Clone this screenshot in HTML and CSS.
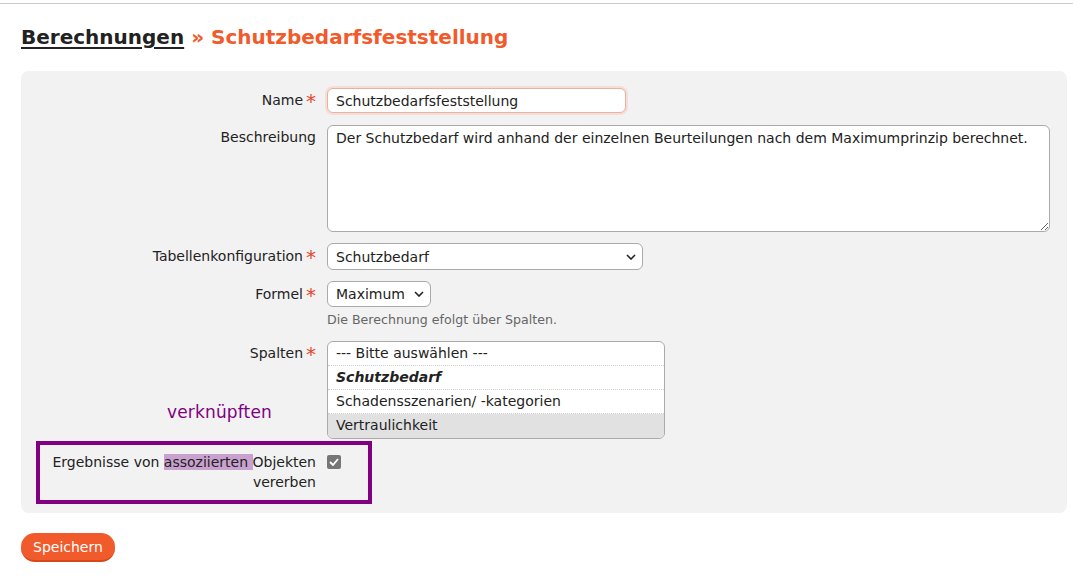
FILE: index.html
```html
<!DOCTYPE html>
<html lang="de">

<head>
    <meta charset="UTF-8">
    <meta name="viewport" content="width=device-width, initial-scale=1.0">
    <title>Schutzbedarfsfeststellung</title>
    <link rel="stylesheet" href="styles.css">
</head>

<body>
    <div class="topline"></div>
    <div class="page">
        <h1 class="crumbs"><a href="#">Berechnungen</a> <span class="current">» Schutzbedarfsfeststellung</span></h1>

        <form class="panel">
            <div class="row row-name">
                <label class="lbl">Name<span class="req">*</span></label>
                <div class="field">
                    <input class="txt focused" value="Schutzbedarfsfeststellung">
                </div>
            </div>
            <div class="row row-desc">
                <label class="lbl">Beschreibung</label>
                <div class="field">
                    <textarea class="area">Der Schutzbedarf wird anhand der einzelnen Beurteilungen nach dem Maximumprinzip berechnet.</textarea>
                </div>
            </div>
            <div class="row row-table">
                <label class="lbl">Tabellenkonfiguration<span class="req">*</span></label>
                <div class="field">
                    <div class="sel sel-wide">
                        <span>Schutzbedarf</span>
                        <svg width="10" height="6" viewBox="0 0 10 6"><path d="M1 1l4 4 4-4" fill="none" stroke="#222" stroke-width="1.6"/></svg>
                    </div>
                </div>
            </div>
            <div class="row row-formel">
                <label class="lbl">Formel<span class="req">*</span></label>
                <div class="field">
                    <div class="sel sel-small">
                        <span>Maximum</span>
                        <svg width="10" height="6" viewBox="0 0 10 6"><path d="M1 1l4 4 4-4" fill="none" stroke="#222" stroke-width="1.6"/></svg>
                    </div>
                    <div class="help">Die Berechnung efolgt über Spalten.</div>
                </div>
            </div>
            <div class="row row-cols">
                <label class="lbl">Spalten<span class="req">*</span></label>
                <div class="field">
                    <div class="multi">
                        <div class="opt">--- Bitte auswählen ---</div>
                        <div class="opt group">Schutzbedarf</div>
                        <div class="opt">Schadensszenarien/ -kategorien</div>
                        <div class="opt picked">Vertraulichkeit</div>
                    </div>
                </div>
            </div>
            <div class="row row-check">
                <label class="lbl">Ergebnisse von <mark>assoziierten </mark>Objekten vererben</label>
                <div class="field">
                    <span class="check">
                        <svg width="10" height="8" viewBox="0 0 10 8"><path d="M1 4l3 3 5-6" fill="none" stroke="#fff" stroke-width="1.8"/></svg>
                    </span>
                </div>
            </div>

            <div class="note">verknüpften</div>
            <div class="frame"></div>
        </form>

        <button class="save" type="button">Speichern</button>
    </div>
</body>

</html>
```

FILE: styles.css
```css
body {
    margin: 0;
    font-family: "DejaVu Sans", sans-serif;
    font-size: 14px;
    color: #222;
    background: #fff;
}

.topline {
    height: 3px;
    border-bottom: 1px solid #cccccc;
}

.page {
    padding: 0 6px 0 21px;
}

.crumbs {
    margin: 0;
    padding-top: 21px;
    height: 46px;
    font-size: 20px;
    line-height: 24px;
    font-weight: bold;
}

.crumbs a {
    color: #222;
    text-decoration: underline;
    text-underline-offset: 3px;
}

.current {
    color: #f15a2b;
}

.panel {
    position: relative;
    background: #f2f2f2;
    border-radius: 8px;
    padding: 17px 17px 21px 0;
}

.row {
    display: flex;
    gap: 11px;
}

.lbl {
    width: 295px;
    flex: none;
    text-align: right;
    line-height: 20px;
}

.field {
    flex: 1;
}

.req {
    color: #e8462b;
    font-size: 20px;
    line-height: 10px;
    margin-left: 3px;
    vertical-align: -3px;
}

.row-name {
    margin-bottom: 12px;
}

.row-name .lbl {
    padding-top: 2px;
}

.txt {
    box-sizing: border-box;
    width: 299px;
    height: 25px;
    border: 1px solid #aaa;
    border-radius: 6px;
    padding: 0 8px;
    font: inherit;
    color: #222;
    background: #fff;
    outline: none;
}

.txt.focused {
    border-color: #e6b2a3;
    box-shadow: 0 0 0 2px #f6ddd5;
}

.row-desc {
    margin-bottom: 11px;
}

.row-desc .lbl {
    padding-top: 2px;
}

.area {
    display: block;
    box-sizing: border-box;
    width: 100%;
    height: 107px;
    border: 1px solid #aaa;
    border-radius: 6px;
    padding: 2px 8px;
    font: inherit;
    line-height: 20px;
    color: #222;
    background: #fff;
    resize: vertical;
}

.row-table {
    margin-bottom: 11px;
}

.row-table .lbl {
    padding-top: 3px;
}

.sel {
    box-sizing: border-box;
    display: flex;
    align-items: center;
    justify-content: space-between;
    height: 27px;
    border: 1px solid #aaa;
    border-radius: 6px;
    padding: 0 6px 0 8px;
    background: #fff;
}

.sel-wide {
    width: 316px;
}

.sel-small {
    width: 104px;
    height: 26px;
}

.row-formel {
    margin-bottom: 12px;
}

.row-formel .lbl {
    padding-top: 3px;
}

.help {
    margin-top: 4px;
    font-size: 12.6px;
    line-height: 18px;
    color: #666;
}

.row-cols {
    margin-bottom: 13px;
}

.row-cols .lbl {
    padding-top: 2px;
}

.multi {
    box-sizing: border-box;
    width: 338px;
    border: 1px solid #aaa;
    border-radius: 6px;
    background: #fff;
    overflow: hidden;
}

.opt {
    height: 24px;
    line-height: 23px;
    padding-left: 8px;
    border-bottom: 1px dotted #ccc;
    box-sizing: border-box;
}

.opt:last-child {
    border-bottom: none;
}

.opt.group {
    font-weight: bold;
    font-style: italic;
}

.opt.picked {
    background: #e1e1e1;
}

.row-check .lbl {
    box-sizing: border-box;
    padding-left: 30px;
}

mark {
    background: #c9a1cf;
    color: inherit;
}

.check {
    display: flex;
    align-items: center;
    justify-content: center;
    width: 14px;
    height: 14px;
    margin-top: 3px;
    border-radius: 2px;
    background: #767676;
}

.note {
    position: absolute;
    left: 146px;
    top: 331px;
    font-size: 17px;
    letter-spacing: 0.15px;
    color: #800080;
}

.frame {
    position: absolute;
    left: 15px;
    top: 370px;
    width: 336px;
    height: 63px;
    box-sizing: border-box;
    border: 4px solid #800080;
}

.save {
    margin-top: 20px;
    height: 29px;
    padding: 0 12px;
    border: none;
    border-bottom: 2px solid #d9461a;
    border-radius: 14px;
    background: #f15a2b;
    color: #fff;
    font-family: "DejaVu Sans", sans-serif;
    font-size: 14px;
    cursor: pointer;
}
```
